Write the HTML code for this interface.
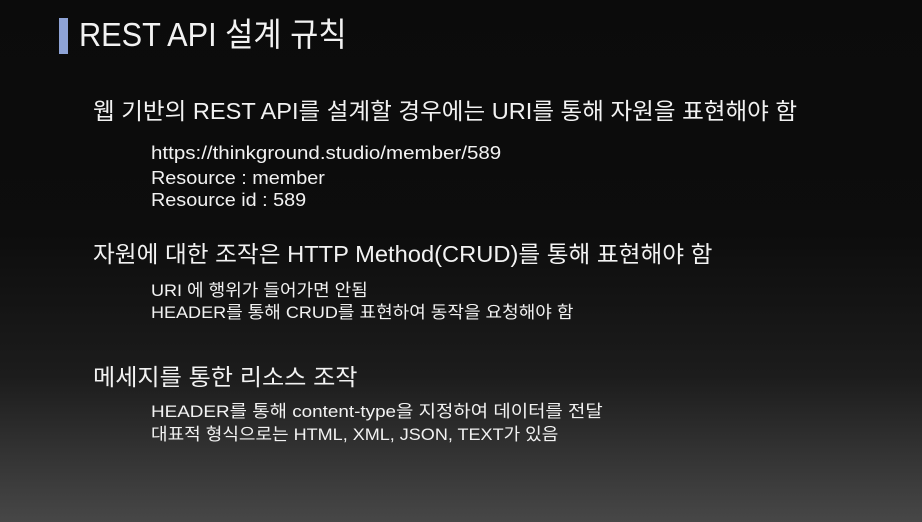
<!DOCTYPE html>
<html><head><meta charset="utf-8"><style>
html,body{margin:0;padding:0}
body{width:922px;height:522px;overflow:hidden;position:relative;background:linear-gradient(180deg,#0b0b0b 0%,#0d0d0d 45%,#1c1c1c 72%,#474747 100%);font-family:"Liberation Sans","Noto Sans CJK KR",sans-serif;color:#f2f2f2}
.t{position:absolute;white-space:nowrap;line-height:1;transform-origin:0 50%}
.bar{position:absolute;left:59px;top:18px;width:9px;height:36px;background:#8ea3d6}
</style></head><body>
<div class="bar"></div>
<div class="t" style="left:79px;top:18px;font-size:33px;transform:scaleX(0.93)">REST API 설계 규칙</div>
<div class="t" style="left:93px;top:100px;font-size:23px;transform:scaleX(1.025)">웹 기반의 REST API를 설계할 경우에는 URI를 통해 자원을 표현해야 함</div>
<div class="t" style="left:151px;top:144px;font-size:18px;transform:scaleX(1.14)">https://thinkground.studio/member/589</div>
<div class="t" style="left:151px;top:169px;font-size:18px;transform:scaleX(1.1)">Resource : member</div>
<div class="t" style="left:151px;top:191px;font-size:18px;transform:scaleX(1.1)">Resource id : 589</div>
<div class="t" style="left:93px;top:243px;font-size:23px;transform:scaleX(1.03)">자원에 대한 조작은 HTTP Method(CRUD)를 통해 표현해야 함</div>
<div class="t" style="left:151px;top:282px;font-size:17px;transform:scaleX(1.06)">URI 에 행위가 들어가면 안됨</div>
<div class="t" style="left:151px;top:304px;font-size:17px;transform:scaleX(1.06)">HEADER를 통해 CRUD를 표현하여 동작을 요청해야 함</div>
<div class="t" style="left:93px;top:366px;font-size:23px;transform:scaleX(1.05)">메세지를 통한 리소스 조작</div>
<div class="t" style="left:151px;top:403px;font-size:17px;transform:scaleX(1.11)">HEADER를 통해 content-type을 지정하여 데이터를 전달</div>
<div class="t" style="left:151px;top:426px;font-size:17px;transform:scaleX(1.06)">대표적 형식으로는 HTML, XML, JSON, TEXT가 있음</div>
</body></html>
